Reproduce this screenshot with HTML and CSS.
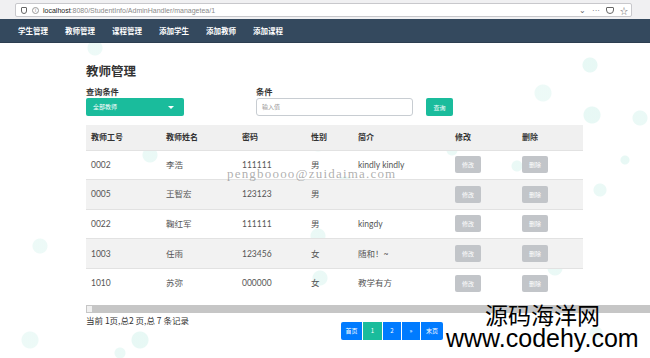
FILE: index.html
```html
<!DOCTYPE html>
<html lang="zh-CN">
<head>
  <meta charset="UTF-8" />
  <title>教师管理</title>
  <link rel="stylesheet" href="styles.css">
</head>
<body>
  <div class="browser-bar">
    <div class="address">
      <span class="shield"></span>
      <span class="info">i</span>
      <span class="url"><b>localhost</b>:8080/StudentInfo/AdminHandler/managetea/1</span>
      <span class="tools">
        <span class="tool">&#8964;</span>
        <span class="tool">&middot;&middot;&middot;</span>
        <span class="pocket"></span>
        <span class="tool">&#9734;</span>
      </span>
    </div>
  </div>

  <div class="navbar">
    <a>学生管理</a>
    <a>教师管理</a>
    <a>课程管理</a>
    <a>添加学生</a>
    <a>添加教师</a>
    <a>添加课程</a>
  </div>

  <div class="page">
    <h2 class="title">教师管理</h2>

    <div class="search">
      <div class="group group-select">
        <label>查询条件</label>
        <div class="select">全部教师<span class="caret"></span></div>
      </div>
      <div class="group">
        <label>条件</label>
        <div class="input">输入值</div>
      </div>
      <button class="btn-search">查询</button>
    </div>

    <table class="grid">
      <thead>
        <tr>
          <th class="c1">教师工号</th>
          <th class="c2">教师姓名</th>
          <th class="c3">密码</th>
          <th class="c4">性别</th>
          <th class="c5">简介</th>
          <th class="c6">修改</th>
          <th class="c7">删除</th>
        </tr>
      </thead>
      <tbody>
        <tr><td>0002</td><td>李浩</td><td>111111</td><td>男</td><td>kindly kindly</td><td><span class="btn-gray">修改</span></td><td><span class="btn-gray">删除</span></td></tr>
        <tr><td>0005</td><td>王智宏</td><td>123123</td><td>男</td><td></td><td><span class="btn-gray">修改</span></td><td><span class="btn-gray">删除</span></td></tr>
        <tr><td>0022</td><td>鞠红军</td><td>111111</td><td>男</td><td>kingdy</td><td><span class="btn-gray">修改</span></td><td><span class="btn-gray">删除</span></td></tr>
        <tr><td>1003</td><td>任雨</td><td>123456</td><td>女</td><td>随和！~</td><td><span class="btn-gray">修改</span></td><td><span class="btn-gray">删除</span></td></tr>
        <tr><td>1010</td><td>苏弥</td><td>000000</td><td>女</td><td>教学有方</td><td><span class="btn-gray">修改</span></td><td><span class="btn-gray">删除</span></td></tr>
      </tbody>
    </table>

    <div class="hscroll"><span class="arrow"></span></div>

    <div class="footer">
      <div class="count">当前 1页,总2 页,总 7 条记录</div>
      <ul class="pager">
        <li>首页</li>
        <li class="active">1</li>
        <li>2</li>
        <li>&raquo;</li>
        <li>末页</li>
      </ul>
    </div>
  </div>

  <div class="mark-mail">pengboooo@zuidaima.com</div>
  <div class="mark-site">
    <div class="site-cn">源码海洋网</div>
    <div class="site-en">www.codehy.com</div>
  </div>
</body>
</html>
```

FILE: styles.css
```css
* {
  margin: 0;
  padding: 0;
  box-sizing: border-box;
}

body {
  width: 650px;
  height: 358px;
  overflow: hidden;
  position: relative;
  font-family: Lato, "Noto Sans CJK SC", sans-serif;
  color: #333;
  background-color: #fff;
  background-image:
    radial-gradient(circle at 95px 48px, rgba(26,188,156,0.08) 7px, transparent 8px),
    radial-gradient(circle at 590px 65px, rgba(26,188,156,0.10) 7px, transparent 8px),
    radial-gradient(circle at 543px 93px, rgba(26,188,156,0.08) 8px, transparent 9px),
    radial-gradient(circle at 592px 115px, rgba(26,188,156,0.10) 8px, transparent 9px),
    radial-gradient(circle at 640px 118px, rgba(26,188,156,0.09) 7px, transparent 8px),
    radial-gradient(circle at 318px 143px, rgba(26,188,156,0.09) 8px, transparent 9px),
    radial-gradient(circle at 150px 155px, rgba(26,188,156,0.09) 7px, transparent 8px),
    radial-gradient(circle at 452px 150px, rgba(26,188,156,0.09) 5px, transparent 6px),
    radial-gradient(circle at 517px 166px, rgba(26,188,156,0.09) 5px, transparent 6px),
    radial-gradient(circle at 625px 160px, rgba(26,188,156,0.10) 4px, transparent 5px),
    radial-gradient(circle at 345px 185px, rgba(26,188,156,0.09) 8px, transparent 9px),
    radial-gradient(circle at 600px 190px, rgba(26,188,156,0.09) 6px, transparent 7px),
    radial-gradient(circle at 318px 236px, rgba(26,188,156,0.09) 7px, transparent 8px),
    radial-gradient(circle at 320px 278px, rgba(26,188,156,0.09) 7px, transparent 8px),
    radial-gradient(circle at 596px 333px, rgba(26,188,156,0.08) 6px, transparent 7px),
    radial-gradient(circle at 555px 268px, rgba(26,188,156,0.09) 7px, transparent 8px),
    radial-gradient(circle at 140px 340px, rgba(26,188,156,0.10) 8px, transparent 9px),
    radial-gradient(circle at 120px 353px, rgba(26,188,156,0.09) 5px, transparent 6px),
    radial-gradient(circle at 30px 340px, rgba(26,188,156,0.08) 8px, transparent 9px),
    radial-gradient(circle at 40px 246px, rgba(26,188,156,0.08) 7px, transparent 8px);
}

/* browser chrome */
.browser-bar {
  height: 19px;
  background: #f0f0f2;
  padding: 3px 18px 2px 15px;
}

.address {
  height: 14px;
  background: #fff;
  border: 1px solid #c8c8cc;
  border-radius: 2px;
  display: flex;
  align-items: center;
  font-family: "Liberation Sans", sans-serif;
  font-size: 7px;
  color: #8a8a8a;
  padding-left: 5px;
}

.shield {
  width: 6px;
  height: 7px;
  border: 1px solid #666;
  border-radius: 1px 1px 3px 3px;
}

.info {
  width: 7px;
  height: 7px;
  border: 1px solid #999;
  border-radius: 50%;
  font-size: 5px;
  line-height: 5px;
  text-align: center;
  margin-left: 5px;
}

.url {
  margin-left: 4px;
}

.url b {
  color: #222;
  font-weight: normal;
}

.tools {
  margin-left: auto;
  display: flex;
  align-items: center;
  gap: 6px;
  padding-right: 3px;
  color: #666;
  font-size: 8px;
}

.pocket {
  width: 8px;
  height: 7px;
  border: 1px solid #666;
  border-radius: 1px 1px 4px 4px;
}

/* top navigation */
.navbar {
  height: 24px;
  background: #34495e;
  display: flex;
  align-items: center;
  padding-left: 18px;
  gap: 17px;
  border-bottom: 1px solid #2c3e50;
}

.navbar a {
  color: #fff;
  font-family: "Noto Sans CJK SC", sans-serif;
  font-size: 7.5px;
  font-weight: bold;
  width: 30px;
}

/* page */
.page {
  padding: 20px 0 0 86px;
}

.title {
  font-family: "Noto Sans CJK SC", sans-serif;
  font-size: 12.5px;
  line-height: 16px;
  font-weight: bold;
  color: #333;
}

.search {
  display: flex;
  margin-top: 7px;
}

.group label {
  display: block;
  font-family: "Noto Sans CJK SC", sans-serif;
  font-size: 8.2px;
  line-height: 11px;
  font-weight: bold;
  color: #333;
  margin-bottom: 1px;
}

.group-select {
  width: 170px;
}

.select {
  width: 98px;
  height: 18px;
  background: #1abc9c;
  border-radius: 2px;
  color: #fff;
  font-family: "Noto Sans CJK SC", sans-serif;
  font-size: 6px;
  line-height: 18px;
  padding-left: 7px;
  position: relative;
}

.caret {
  position: absolute;
  right: 10px;
  top: 8px;
  border-left: 3px solid transparent;
  border-right: 3px solid transparent;
  border-top: 3px solid #fff;
}

.input {
  width: 157px;
  height: 18px;
  border: 1px solid #c8cdd2;
  border-radius: 3px;
  background: #fff;
  font-family: "Noto Sans CJK SC", sans-serif;
  font-size: 6px;
  line-height: 16px;
  color: #999;
  padding-left: 5px;
}

.btn-search {
  align-self: flex-end;
  margin-left: 13px;
  width: 27px;
  height: 18px;
  border: none;
  border-radius: 2px;
  background: #1abc9c;
  color: #fff;
  font-family: "Noto Sans CJK SC", sans-serif;
  font-size: 6px;
}

/* table */
.grid {
  margin-top: 9px;
  width: 497px;
  border-collapse: collapse;
  table-layout: fixed;
}

.grid th {
  height: 25px;
  background: #f0f0f0;
  text-align: left;
  font-family: "Noto Sans CJK SC", sans-serif;
  font-size: 8px;
  line-height: 12px;
  font-weight: bold;
  color: #333;
  padding-left: 5px;
}

.grid td {
  height: 29.6px;
  font-size: 8.5px;
  line-height: 12px;
  color: #555;
  padding-left: 5px;
  border-top: 1px solid #e2e2e2;
}

.grid tbody tr:nth-child(even) td {
  background: #f2f2f2;
}

.c1 { width: 75px; }
.c2 { width: 76px; }
.c3 { width: 69px; }
.c4 { width: 47px; }
.c5 { width: 97px; }
.c6 { width: 67px; }
.c7 { width: 66px; }

.btn-gray {
  display: inline-block;
  width: 26px;
  height: 17px;
  background: #c2c5c9;
  border-radius: 2px;
  color: #fff;
  font-family: "Noto Sans CJK SC", sans-serif;
  font-size: 6px;
  line-height: 17px;
  text-align: center;
  vertical-align: middle;
}

.hscroll {
  margin-top: 7px;
  height: 8px;
  background: #c6c6c6;
  display: flex;
}

.arrow {
  width: 7px;
  height: 8px;
  background: #f0f0f0;
  border: 1px solid #c6c6c6;
}

.footer {
  display: flex;
  margin-top: 1px;
}

.count {
  width: 255px;
  font-family: "Noto Sans CJK SC", sans-serif;
  font-size: 8.5px;
  line-height: 12px;
  color: #333;
}

.pager {
  list-style: none;
  display: flex;
  gap: 1px;
  margin-top: 8px;
}

.pager li {
  height: 18px;
  min-width: 18px;
  padding: 0 4px;
  background: #007bff;
  color: #fff;
  font-family: "Noto Sans CJK SC", sans-serif;
  font-size: 6px;
  line-height: 18px;
  text-align: center;
}

.pager li:first-child {
  border-radius: 2px 0 0 2px;
  width: 21px;
}

.pager li:last-child {
  border-radius: 0 2px 2px 0;
  width: 22px;
}

.pager li.active {
  background: #1abc9c;
  width: 19px;
}

/* watermarks */
.mark-mail {
  position: absolute;
  left: 227px;
  top: 167px;
  font-family: "Liberation Serif", serif;
  font-size: 13px;
  line-height: 14px;
  letter-spacing: 1.2px;
  color: rgba(120, 120, 120, 0.6);
}

.mark-site {
  position: absolute;
  left: 446px;
  top: 301px;
  color: #000;
}

.site-cn {
  font-family: "Noto Sans CJK SC", sans-serif;
  font-size: 23px;
  line-height: 27px;
  padding-left: 39px;
}

.site-en {
  font-family: "Liberation Sans", sans-serif;
  font-size: 25px;
  line-height: 21px;
}
```
